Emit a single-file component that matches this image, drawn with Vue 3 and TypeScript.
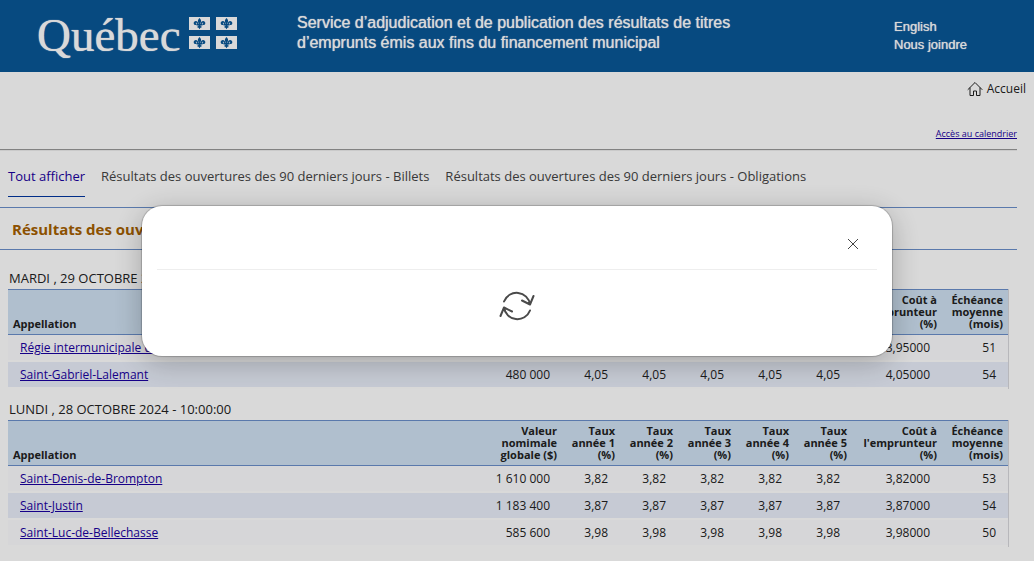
<script setup lang="ts">
import { ref } from 'vue'

interface Issue {
  name: string
  amount: string
  rates: string[]
  cost: string
  term: string
}

interface Session {
  heading: string
  issues: Issue[]
}

const issue = (name: string, amount: string, rate: string, term: string): Issue => ({
  name,
  amount,
  rates: Array.from({ length: 5 }, () => rate),
  cost: `${rate}000`,
  term,
})

const sessions: Session[] = [
  {
    heading: 'MARDI , 29 OCTOBRE 2024 - 10:00:00',
    issues: [
      issue("Régie intermunicipale d'aqueduc", '1 254 000', '3,95', '51'),
      issue('Saint-Gabriel-Lalemant', '480 000', '4,05', '54'),
    ],
  },
  {
    heading: 'LUNDI , 28 OCTOBRE 2024 - 10:00:00',
    issues: [
      issue('Saint-Denis-de-Brompton', '1 610 000', '3,82', '53'),
      issue('Saint-Justin', '1 183 400', '3,87', '54'),
      issue('Saint-Luc-de-Bellechasse', '585 600', '3,98', '50'),
    ],
  },
]

const tabs: string[] = [
  'Tout afficher',
  'Résultats des ouvertures des 90 derniers jours - Billets',
  'Résultats des ouvertures des 90 derniers jours - Obligations',
]
const activeTab = ref(0)
const loading = ref(true)
</script>

<template>
  <div class="page">
    <header class="banner">
      <a class="logo" href="#" aria-label="Québec">
        <span class="wordmark">Québec</span>
        <span class="flags">
          <svg v-for="n in 4" :key="n" class="flag" viewBox="0 0 21 13" aria-hidden="true">
            <rect width="21" height="13" fill="#fff" />
            <g fill="#095797">
              <path d="M10.5 1C9.600 2.200 8.900 3 8.900 4c0 1.200.7 1.800.7 3h1.800c0-1.200.7-1.800.7-3 0-1-.7-1.800-1.600-3z" />
              <path d="M9.400 7.200C9.200 5 8.200 4 6.900 4 5.500 4 4.700 5 4.700 6.200c0 1.100.8 1.900 1.700 1.900.7 0 1.200-.4 1.200-1s-.4-.9-.9-.9c.1-.4.400-.5.800-.4.500.2.700.8.700 1.400z" />
              <path d="M11.600 7.200c.2-2.200 1.200-3.200 2.500-3.200 1.400 0 2.200 1 2.200 2.200 0 1.100-.8 1.900-1.700 1.900-.7 0-1.200-.4-1.200-1s.4-.9.9-.9c-.1-.4-.4-.5-.8-.4-.5.200-.7.800-.7 1.400z" />
              <rect x="7.500" y="7" width="6" height="1.500" />
              <path d="M9.600 8h1.800c0 1 .3 1.600 1.500 1.500-.2 1-1 1.400-1.600 1.200-.1.600-.4 1.100-.8 1.600-.4-.5-.7-1-.8-1.600-.6.200-1.400-.2-1.600-1.200C9.300 9.600 9.600 9 9.600 8z" />
            </g>
          </svg>
        </span>
      </a>
      <p class="service">
        Service d’adjudication et de publication des résultats de titres<br />
        d’emprunts émis aux fins du financement municipal
      </p>
      <nav class="utility">
        <a href="#">English</a>
        <a href="#">Nous joindre</a>
      </nav>
    </header>

    <div class="home-row">
      <a class="home" href="#">
        <svg viewBox="0 0 16 16" aria-hidden="true">
          <path d="M1 8.500 8 1.500l7 7M3 7v7.500h3.500V10h3v4.500H13V7" fill="none" stroke="#222" stroke-linejoin="round" stroke-linecap="round" />
        </svg>
        Accueil
      </a>
    </div>

    <main class="content">
      <div class="calendar"><a href="#">Accès au calendrier</a></div>
      <nav class="tabs">
        <button
          v-for="(tab, i) in tabs"
          :key="tab"
          type="button"
          class="tab"
          :class="{ active: i === activeTab }"
          @click="activeTab = i"
        >{{ tab }}</button>
      </nav>
      <h1 class="title">Résultats des ouvertures des 90 derniers jours</h1>

      <section v-for="session in sessions" :key="session.heading" class="session">
        <h2>{{ session.heading }}</h2>
        <table>
          <colgroup>
            <col />
            <col class="c-amount" />
            <col v-for="n in 5" :key="n" class="c-rate" />
            <col class="c-cost" />
            <col class="c-term" />
          </colgroup>
          <thead>
            <tr>
              <th class="name" scope="col">Appellation</th>
              <th scope="col">Valeur<br />nomimale<br />globale ($)</th>
              <th v-for="n in 5" :key="n" scope="col">Taux<br />année {{ n }}<br />(%)</th>
              <th scope="col">Coût à<br />l'emprunteur<br />(%)</th>
              <th scope="col">Échéance<br />moyenne<br />(mois)</th>
            </tr>
          </thead>
          <tbody>
            <tr v-for="row in session.issues" :key="row.name">
              <td class="name"><a href="#">{{ row.name }}</a></td>
              <td>{{ row.amount }}</td>
              <td v-for="(rate, i) in row.rates" :key="i">{{ rate }}</td>
              <td>{{ row.cost }}</td>
              <td>{{ row.term }}</td>
            </tr>
          </tbody>
        </table>
      </section>
    </main>

    <div v-if="loading" class="overlay">
      <div class="dialog" role="dialog" aria-modal="true" aria-label="Chargement">
        <div class="dialog-head">
          <button type="button" class="close" aria-label="Fermer" @click="loading = false">
            <svg viewBox="0 0 12 12" aria-hidden="true">
              <path d="M1 1l10 10M11 1 1 11" stroke="#444" fill="none" />
            </svg>
          </button>
        </div>
        <div class="dialog-body">
          <svg class="spinner" viewBox="0 0 36 32" aria-hidden="true">
            <g fill="none" stroke="#4a4a4a" stroke-width="2" stroke-linecap="round" stroke-linejoin="round">
              <path d="M5 11.500A13.500 13.500 0 0 1 31 14.500M23 10.500l8 4 3.500-8.500" />
              <path d="M31 20.500A13.500 13.500 0 0 1 5 17.500M13 21.500l-8-4L1.500 26" />
            </g>
          </svg>
        </div>
      </div>
    </div>
  </div>
</template>

<style>
body {
  margin: 0;
  background: #fff;
}
</style>

<style scoped>
.page {
  font-family: "Segoe UI", "Open Sans", "Noto Sans", sans-serif;
  font-size: 12px;
  color: #222;
}

.banner {
  display: flex;
  height: 72px;
  box-sizing: border-box;
  padding: 12px 67px 0 37px;
  background: #095797;
  color: #fff;
  font-family: "Liberation Sans", Arial, sans-serif;
  text-shadow: 0 0 1px #fff;
}

.banner a {
  color: inherit;
  text-decoration: none;
}

.logo {
  display: flex;
  gap: 8px;
  width: 260px;
  flex: none;
}

.wordmark {
  font: 47px/46px "Liberation Serif", "Times New Roman", serif;
}

.flags {
  display: grid;
  grid-template-columns: 21px 21px;
  grid-auto-rows: 13px;
  gap: 6px;
  padding-top: 5px;
}

.flag {
  width: 21px;
  height: 13px;
}

.service {
  flex: 1;
  margin: 0;
  padding-top: 1px;
  font-size: 16px;
  line-height: 20px;
}

.utility {
  display: flex;
  flex-direction: column;
  padding-top: 6px;
  font-size: 13px;
  line-height: 18px;
}

.home-row {
  display: flex;
  justify-content: flex-end;
  padding: 8px 8px 0 0;
}

.home {
  display: flex;
  align-items: center;
  gap: 4px;
  line-height: 17px;
  color: #222;
  text-decoration: none;
}

.home svg {
  width: 16px;
  height: 16px;
}

.content {
  margin-right: 17px;
}

.calendar {
  padding: 29px 0 7px;
  border-bottom: 1px solid #999;
  box-shadow: 0 1px #eee;
  font-size: 9px;
  line-height: 16px;
  text-align: right;
}

.content a {
  color: #1a00a0;
}

.tabs {
  display: flex;
  gap: 16px;
  height: 57px;
  box-sizing: border-box;
  padding: 9px 8px 0;
}

.tab {
  height: 38px;
  padding: 0 0 4px;
  border: 0;
  border-bottom: 1px solid transparent;
  background: none;
  font: inherit;
  font-size: 13px;
  color: #444;
}

.tab.active {
  border-color: #0036a0;
  color: #1a00a0;
}

.title {
  margin: 0;
  padding: 1px 12px 0;
  border: solid #6a8fca;
  border-width: 1px 0;
  font-size: 15px;
  line-height: 40px;
  color: #a56000;
}

.session {
  margin-right: 8px;
  padding: 19px 0 0 8px;
}

.session + .session {
  padding-top: 11px;
}

h2 {
  margin: 0;
  padding: 0 0 2px 1px;
  font-size: 13px;
  font-weight: 400;
  line-height: 18px;
}

table {
  width: 100%;
  table-layout: fixed;
  border-collapse: separate;
  border-spacing: 0;
  border-right: 1px solid #d8d8dc;
}

.c-amount {
  width: 74px;
}

.c-rate {
  width: 58px;
}

.c-cost {
  width: 90px;
}

.c-term {
  width: 66px;
}

th {
  height: 46px;
  box-sizing: border-box;
  padding: 0 5px;
  border: solid #6a8fca;
  border-width: 1px 0;
  background: #cfe1f2;
  font-size: 11px;
  line-height: 12px;
  text-align: right;
  vertical-align: middle;
  white-space: nowrap;
}

th.name {
  text-align: left;
  vertical-align: bottom;
  padding-bottom: 4px;
}

td {
  height: 25px;
  padding: 0 12px 0 0;
  border-bottom: 2px solid #fff;
  background: #fcfcfe;
  line-height: 25px;
  text-align: right;
  white-space: nowrap;
}

tr:nth-child(even) td {
  background: #e9eef9;
}

td.name {
  padding-left: 12px;
  text-align: left;
}

.overlay {
  position: fixed;
  inset: 0;
  display: flex;
  justify-content: center;
  align-items: flex-start;
  padding-top: 206px;
  background: rgba(0, 0, 0, 0.15);
}

.dialog {
  width: 100%;
  max-width: 750px;
  border-radius: 20px;
  background: #fff;
  box-shadow: 0 0 1px 1px rgba(0, 0, 0, 0.2), 0 6px 30px rgba(0, 0, 0, 0.25);
}

.dialog-head {
  display: flex;
  justify-content: flex-end;
  margin: 0 15px;
  padding: 26px 12px 13px;
  border-bottom: 1px solid #eee;
}

.close {
  display: grid;
  place-items: center;
  width: 24px;
  height: 24px;
  padding: 0;
  border: 0;
  background: none;
}

.close svg {
  width: 12px;
  height: 12px;
}

.dialog-body {
  display: flex;
  justify-content: center;
  padding: 20px 0 34px;
}

.spinner {
  width: 36px;
  height: 32px;
}
</style>
